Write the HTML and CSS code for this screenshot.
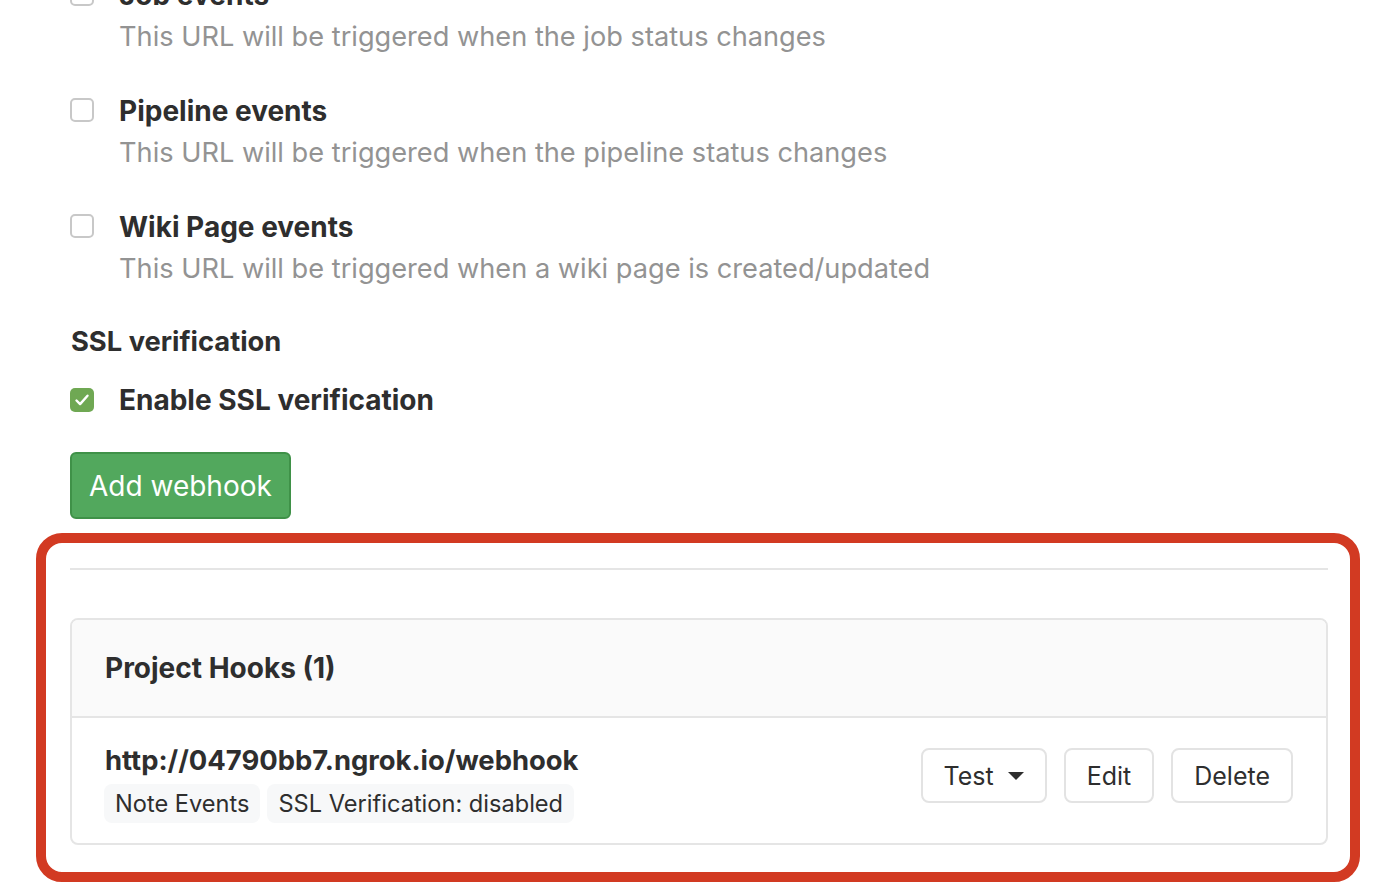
FILE: index.html
```html
<!DOCTYPE html>
<html lang="en">
<head>
<meta charset="utf-8">
<title>Webhooks</title>
<link rel="stylesheet" href="styles.css">
</head>
<body>
<main class="page">
  <div class="events">
    <div class="event event-cut">
      <span class="checkbox"></span>
      <div class="event-text">
        <div class="event-title">Job events</div>
        <div class="event-desc">This URL will be triggered when the job status changes</div>
      </div>
    </div>
    <div class="event">
      <span class="checkbox"></span>
      <div class="event-text">
        <div class="event-title">Pipeline events</div>
        <div class="event-desc">This URL will be triggered when the pipeline status changes</div>
      </div>
    </div>
    <div class="event">
      <span class="checkbox"></span>
      <div class="event-text">
        <div class="event-title">Wiki Page events</div>
        <div class="event-desc">This URL will be triggered when a wiki page is created/updated</div>
      </div>
    </div>
  </div>

  <div class="ssl">
    <div class="ssl-label">SSL verification</div>
    <div class="ssl-check">
      <span class="checkbox checked">
        <svg viewBox="0 0 24 24" width="24" height="24"><path d="M6.5 12.5l3.6 3.6 7.4-8.4" fill="none" stroke="#fff" stroke-width="2.4" stroke-linecap="round" stroke-linejoin="round"/></svg>
      </span>
      <span class="ssl-check-label">Enable SSL verification</span>
    </div>
  </div>

  <button class="btn-add">Add webhook</button>

  <section class="frame">
    <hr class="rule">
    <div class="card">
      <div class="card-header">Project Hooks (1)</div>
      <div class="hook-row">
        <div class="hook-info">
          <div class="hook-url">http://04790bb7.ngrok.io/webhook</div>
          <div class="badges">
            <span class="badge">Note Events</span>
            <span class="badge">SSL Verification: disabled</span>
          </div>
        </div>
        <div class="hook-actions">
          <button class="btn">Test <svg class="caret" viewBox="0 0 16 8" width="16" height="8"><path d="M0 0h16L8 8z" fill="#2e2e2e"/></svg></button>
          <button class="btn">Edit</button>
          <button class="btn">Delete</button>
        </div>
      </div>
    </div>
  </section>
</main>
</body>
</html>
```

FILE: styles.css
```css
* { box-sizing: border-box; }
html, body { margin: 0; padding: 0; background: #fff; }
body {
  font-family: Inter, "Noto Sans", "Liberation Sans", sans-serif;
  color: #2e2e2e;
  font-size: 28px;
  line-height: 40px;
  overflow: hidden;
  height: 890px;
}
.page {
  padding: 0 46px 0 70px;
}
.events {
  margin-top: -26px;
}
.event {
  display: flex;
  align-items: flex-start;
  margin-bottom: 32px;
}
.checkbox {
  flex: none;
  width: 24px;
  height: 24px;
  border: 2px solid #c8c8c8;
  border-radius: 5px;
  background: #fff;
  margin-top: 8px;
  margin-right: 25px;
  display: flex;
  align-items: center;
  justify-content: center;
}
.checkbox.checked {
  border: none;
  background: #6fa853;
}
.checkbox.checked svg { display: block; }
.event-title {
  font-weight: 700;
  line-height: 42px;
}
.event-desc {
  color: #939393;
  line-height: 42px;
  font-size: 27.2px;
}
.ssl {
  margin-top: 1px;
}
.ssl-label {
  font-weight: 700;
  font-size: 27.3px;
  margin-left: 1px;
  line-height: 40px;
}
.ssl-check {
  display: flex;
  align-items: center;
  margin-top: 18px;
}
.ssl-check .checkbox { margin-top: 0; }
.ssl-check-label {
  font-weight: 700;
}
.btn-add {
  display: block;
  margin-top: 32px;
  height: 67px;
  padding: 0 17px;
  font-family: inherit;
  font-size: 28px;
  color: #fff;
  background: #52a85d;
  border: 2px solid #3f9148;
  border-radius: 6px;
}
.frame {
  margin: 14px -32px 0 -34px;
  border: 10px solid #d23a22;
  border-radius: 26px;
  padding: 25px 22px 27px 24px;
}
.rule {
  margin: 0;
  border: none;
  border-top: 2px solid #e5e5e5;
}
.card {
  margin-top: 48px;
  border: 2px solid #e5e5e5;
  border-radius: 8px;
  overflow: hidden;
}
.card-header {
  background: #fafafa;
  border-bottom: 2px solid #e5e5e5;
  padding: 28px 33px;
  font-weight: 700;
  line-height: 40px;
}
.hook-row {
  display: flex;
  justify-content: space-between;
  align-items: flex-start;
  padding: 22px 33px 20px 33px;
}
.hook-url {
  font-weight: 700;
  font-size: 27.4px;
  line-height: 40px;
}
.badges {
  display: flex;
  gap: 7px;
  margin-top: 4px;
  margin-left: -1px;
}
.badge {
  background: #f7f8f9;
  border-radius: 8px;
  padding: 0 11px;
  font-size: 23.6px;
  line-height: 39px;
  height: 39px;
}
.hook-actions {
  display: flex;
  gap: 17px;
  margin-top: 8px;
}
.btn {
  height: 55px;
  padding: 0 21px;
  font-family: inherit;
  font-size: 25px;
  color: #2e2e2e;
  background: #fff;
  border: 2px solid #e3e3e3;
  border-radius: 8px;
  display: flex;
  align-items: center;
}
.caret {
  margin-left: 14px;
  display: block;
}
```
